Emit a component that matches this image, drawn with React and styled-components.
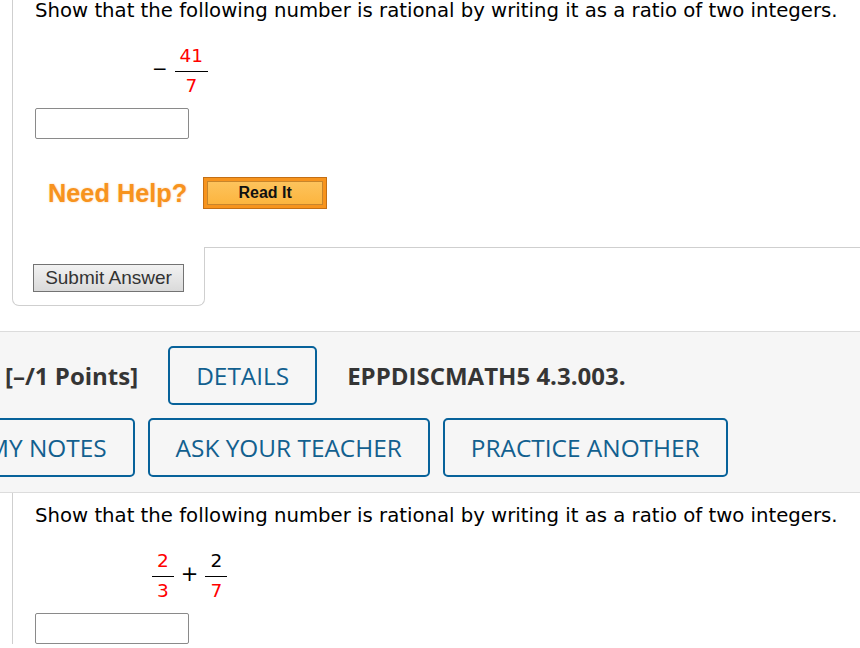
import React from 'react';
import styled, { createGlobalStyle } from 'styled-components';

const GlobalStyle = createGlobalStyle`
  body {
    margin: 0;
    background: #ffffff;
    overflow: hidden;
  }
`;

const Fraction = ({ top, bottom, topColor = 'red' }) => (
  <Frac>
    <FracNum $color={topColor}>{top}</FracNum>
    <FracBar />
    <FracDen>{bottom}</FracDen>
  </Frac>
);

const Question = ({ children }) => (
  <>
    <Prompt>Show that the following number is rational by writing it as a ratio of two integers.</Prompt>
    <MathRow>{children}</MathRow>
    <AnswerInput type="text" />
  </>
);

const App = () => {
  return (
    <>
      <GlobalStyle />
      <Page>
        <Card>
          <CardBody>
            <Question>
              <Operator>−</Operator>
              <Fraction top="41" bottom="7" />
            </Question>
            <HelpRow>
              <NeedHelp>Need Help?</NeedHelp>
              <ReadItBtn>
                <span>Read It</span>
              </ReadItBtn>
            </HelpRow>
          </CardBody>
          <CardFooter>
            <SubmitTab>
              <SubmitBtn>Submit Answer</SubmitBtn>
            </SubmitTab>
            <FooterFill />
          </CardFooter>
        </Card>

        <HeaderBand>
          <HeaderRow>
            <Points>[–/1 Points]</Points>
            <OutlineBtn>DETAILS</OutlineBtn>
            <Points>EPPDISCMATH5 4.3.003.</Points>
          </HeaderRow>
          <HeaderRow $shift="-41px" $gap="13px">
            <OutlineBtn>MY NOTES</OutlineBtn>
            <OutlineBtn>ASK YOUR TEACHER</OutlineBtn>
            <OutlineBtn>PRACTICE ANOTHER</OutlineBtn>
          </HeaderRow>
        </HeaderBand>

        <Card>
          <CardBody $top="12px">
            <Question>
              <Fraction top="2" bottom="3" />
              <Operator $size="21px">+</Operator>
              <Fraction top="2" bottom="7" topColor="#000" />
            </Question>
          </CardBody>
        </Card>
      </Page>
    </>
  );
};

export default App;

const Page = styled.div`
  width: 860px;
  font-family: 'DejaVu Sans', Verdana, sans-serif;
  color: #000;
`;

const Card = styled.div`
  margin-left: 12px;
`;

const CardBody = styled.div`
  border-left: 1px solid #cfcfcf;
  padding: ${({ $top }) => $top || '0'} 0 0 22px;
  display: flex;
  flex-direction: column;
  align-items: flex-start;
`;

const Prompt = styled.p`
  margin: -1px 0 0 0;
  font-size: 19.7px;
  line-height: 23px;
  white-space: nowrap;
`;

const MathRow = styled.div`
  display: flex;
  align-items: center;
  gap: 7px;
  margin: 25px 0 0 117px;
  font-size: 18.5px;
`;

const Operator = styled.span`
  font-size: ${({ $size }) => $size || '18.5px'};
  line-height: 22px;
  margin-bottom: 5px;
`;

const Frac = styled.span`
  display: inline-flex;
  flex-direction: column;
  align-items: stretch;
  text-align: center;
`;

const FracNum = styled.span`
  line-height: 18px;
  padding: 0 5px;
  margin-bottom: 6px;
  color: ${({ $color }) => $color};
`;

const FracBar = styled.span`
  height: 1px;
  background: #000;
`;

const FracDen = styled.span`
  line-height: 18px;
  margin-top: 5px;
  color: red;
`;

const AnswerInput = styled.input`
  box-sizing: border-box;
  width: 154px;
  height: 31px;
  margin-top: 13px;
  border: 1px solid #8a8a8a;
  border-radius: 2px;
  background: #fff;
`;

const HelpRow = styled.div`
  display: flex;
  align-items: center;
  gap: 16px;
  margin: 38px 0 38px 13px;
`;

const NeedHelp = styled.span`
  font-family: 'Liberation Sans', Arial, sans-serif;
  font-weight: 700;
  font-size: 25.3px;
  color: #f7931e;
  text-shadow: 0 0 2px rgba(250, 170, 80, 0.6);
`;

const ReadItBtn = styled.button`
  box-sizing: border-box;
  width: 124px;
  height: 32px;
  padding: 3px;
  border: 1px solid #c36f15;
  background: #f7941d;
  cursor: pointer;
  span {
    display: flex;
    align-items: center;
    justify-content: center;
    height: 100%;
    box-sizing: border-box;
    border: 1px solid #c7852c;
    background: linear-gradient(#fdc35c, #fcb53f);
    font-family: 'Liberation Sans', Arial, sans-serif;
    font-weight: 700;
    font-size: 16px;
    color: #111;
  }
`;

const CardFooter = styled.div`
  display: flex;
  align-items: flex-start;
`;

const SubmitTab = styled.div`
  border: 1px solid #cfcfcf;
  border-top: none;
  border-radius: 0 0 7px 7px;
  padding: 17px 20px 13px 20px;
`;

const FooterFill = styled.div`
  flex: 1;
  border-top: 1px solid #cfcfcf;
`;

const SubmitBtn = styled.button`
  box-sizing: border-box;
  width: 151px;
  height: 28px;
  padding: 0;
  border: 1px solid #737373;
  background: linear-gradient(#f2f2f2, #dadada);
  font-family: 'Liberation Sans', Arial, sans-serif;
  font-size: 19px;
  color: #333;
  cursor: pointer;
`;

const HeaderBand = styled.div`
  margin-top: 25px;
  padding: 14px 0 15px 0;
  background: #f6f6f6;
  border-top: 1px solid #dcdcdc;
  border-bottom: 1px solid #dcdcdc;
  display: flex;
  flex-direction: column;
  gap: 13px;
  font-family: 'Open Sans', sans-serif;
`;

const HeaderRow = styled.div`
  display: flex;
  align-items: center;
  gap: ${({ $gap }) => $gap || '30px'};
  margin-left: ${({ $shift }) => $shift || '5px'};
  white-space: nowrap;
`;

const Points = styled.span`
  font-size: 24px;
  font-weight: 700;
  color: #353535;
`;

const OutlineBtn = styled.button`
  flex: none;
  box-sizing: border-box;
  height: 59px;
  padding: 0 26px;
  border: 2px solid #07629a;
  border-radius: 5px;
  background: transparent;
  font-family: 'Open Sans', sans-serif;
  font-size: 24.4px;
  font-weight: 400;
  line-height: 31px;
  color: #12608f;
  cursor: pointer;
`;
